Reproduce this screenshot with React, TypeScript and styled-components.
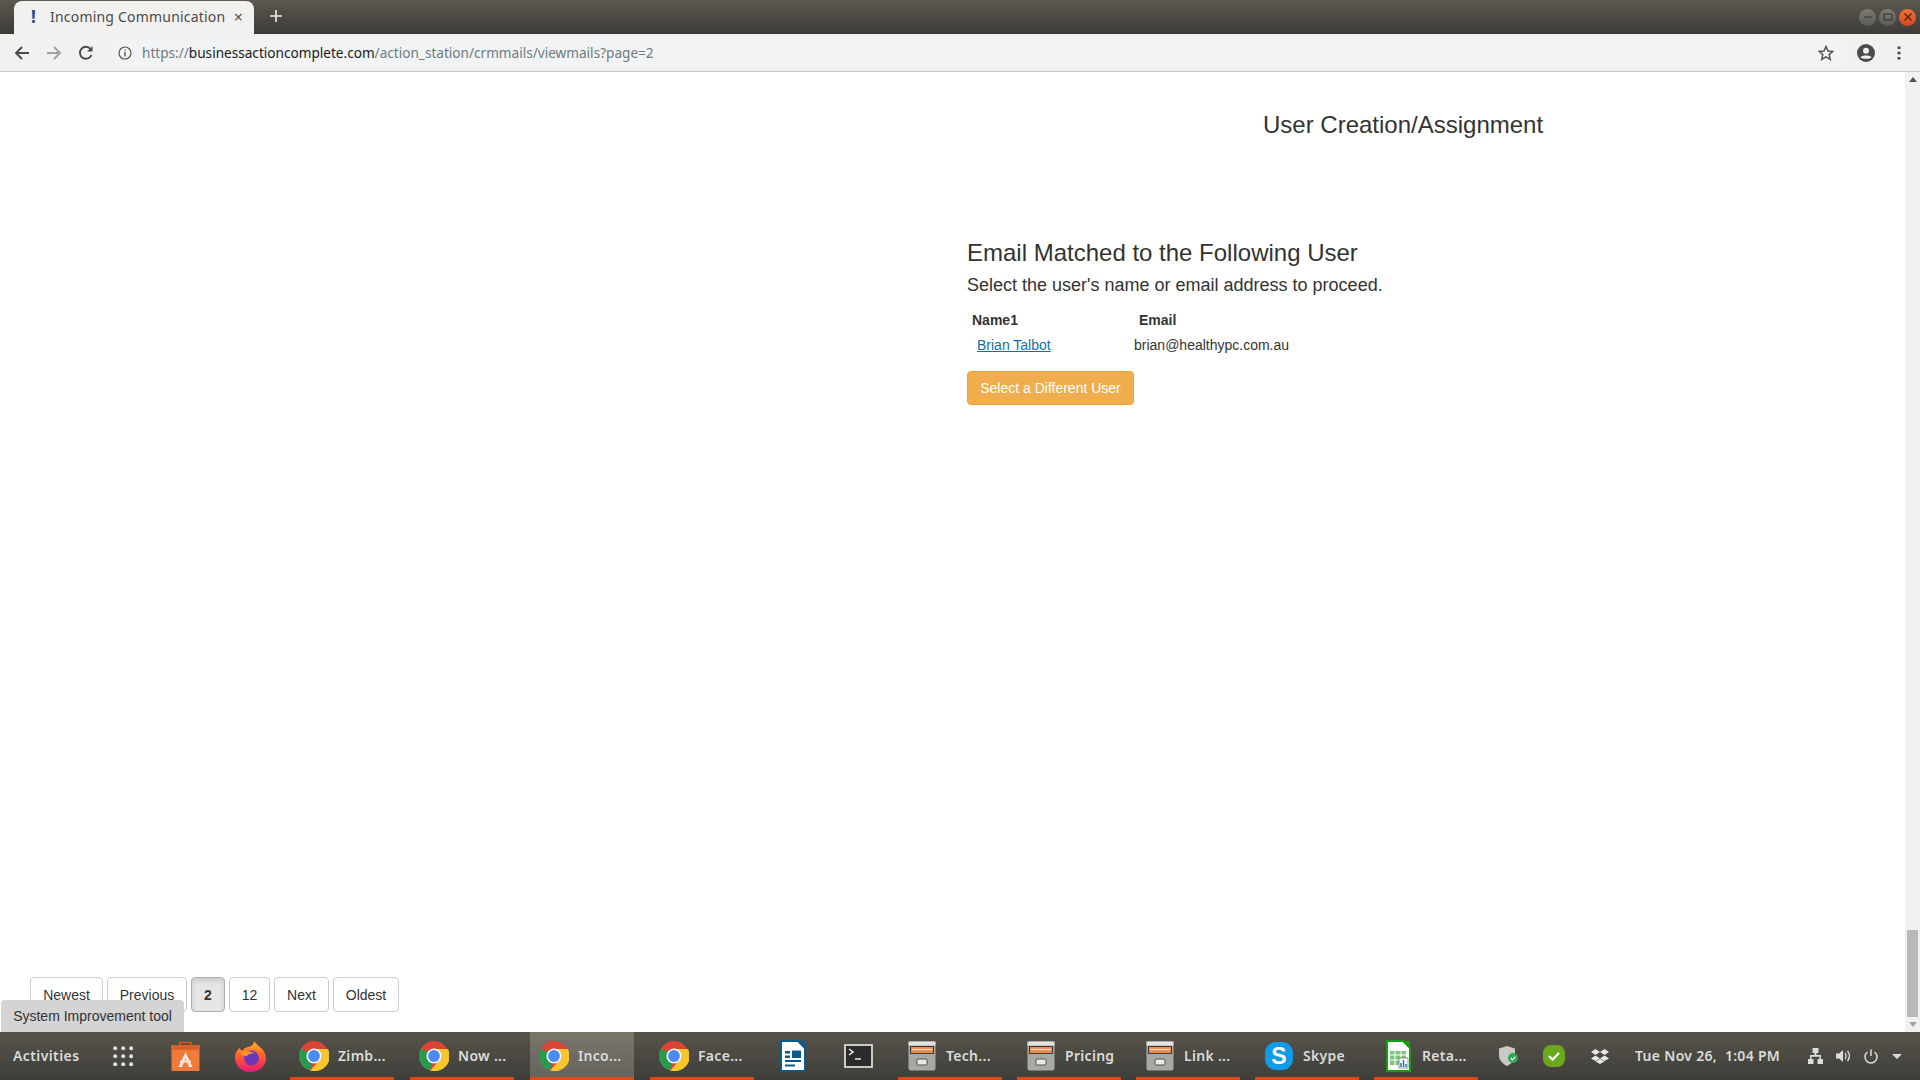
import styled, { createGlobalStyle } from "styled-components";

const GlobalStyle = createGlobalStyle`
  html, body { margin: 0; padding: 0; background: #fff; }
  body { font-family: "Liberation Sans", Arial, sans-serif; overflow: hidden; }
`;

function ChromeIcon() {
  return (
    <svg width="30" height="30" viewBox="0 0 30 30">
      <circle cx="15" cy="15" r="15" fill="#db4437" />
      <path d="M15 15 L2 7.5 A15 15 0 0 0 11.2 29.5 Z" fill="#2a9a50" />
      <path d="M15 8 H28.9 A15 15 0 0 1 11.2 29.5 L21 18.5 Z" fill="#f6c52f" />
      <circle cx="15" cy="15" r="7.6" fill="#f4f4f4" />
      <circle cx="15" cy="15" r="5.9" fill="#4c8bf0" />
    </svg>
  );
}

function StoreIcon() {
  return (
    <svg width="29" height="30" viewBox="0 0 29 30">
      <path d="M9 5 V1.5 H20 V5" fill="none" stroke="#c8531f" strokeWidth="2" />
      <path d="M0.5 4 H28.5 V30 H0.5 Z" fill="#ee7b3a" />
      <path d="M0.5 4 H28.5 V9 H0.5 Z" fill="#d9622a" />
      <path d="M14.5 11 L21.5 26 H18 L14.5 17.5 L11 26 H7.5 Z M9 19.5 H20 V21.5 H9 Z" fill="#fbe7d8" />
    </svg>
  );
}

function FirefoxIcon() {
  return (
    <svg width="31" height="31" viewBox="0 0 31 31">
      <defs>
        <linearGradient id="fx" x1="0" y1="0" x2="0" y2="1">
          <stop offset="0" stopColor="#ffb52e" />
          <stop offset="0.5" stopColor="#ff5a2c" />
          <stop offset="1" stopColor="#e3197a" />
        </linearGradient>
      </defs>
      <path d="M19 0 C22 5 31 8 31 17.5 C31 25.5 24 31 15.5 31 C7 31 0 25 0 17 C0 12 2.5 8.5 4.5 7 C5.5 8.5 6.5 9.5 7.5 9.5 C9.5 6.5 13 5.5 15.5 5.5 C17.5 4.5 19 2.5 19 0 Z" fill="url(#fx)" />
      <ellipse cx="16.5" cy="17" rx="7.5" ry="7.5" fill="#6e37b5" />
      <path d="M5 12 C9 9.5 15 9.5 20 12.5 C16 11.8 13 13 12 15 C8.5 15 6 14 5 12 Z" fill="#ff9a2e" />
    </svg>
  );
}

function WriterIcon() {
  return (
    <svg width="26" height="32" viewBox="0 0 26 32">
      <path d="M1 1 H18 L25 8 V31 H1 Z" fill="#fff" stroke="#0a5a8c" strokeWidth="2" />
      <path d="M18 1 H25 V8 Z" fill="#0a5a8c" />
      <path d="M5 11 H10 V13.5 H5 Z M5 15.5 H10 V18 H5 Z M5 20 H21 V22 H5 Z M5 24.5 H15 V26.5 H5 Z" fill="#0a5a8c" />
      <path d="M12 10.5 H21 V18 H12 Z" fill="#0a5a8c" />
    </svg>
  );
}

function TerminalIcon() {
  return (
    <svg width="29" height="24" viewBox="0 0 29 24">
      <rect x="1" y="1" width="27" height="22" fill="#2b2b2b" stroke="#c9c9c5" strokeWidth="2" />
      <path d="M5 5 L9 8 L5 11" fill="none" stroke="#eee" strokeWidth="1.5" />
      <path d="M11 15 H17" stroke="#eee" strokeWidth="1.5" />
    </svg>
  );
}

function FilesIcon() {
  return (
    <svg width="28" height="30" viewBox="0 0 28 30">
      <rect x="0.5" y="0.5" width="27" height="29" rx="2" fill="#a9a8a5" />
      <rect x="0.5" y="0.5" width="27" height="4" fill="#e2e2df" />
      <rect x="2" y="5" width="24" height="8" fill="#3d3a36" />
      <rect x="3" y="6" width="22" height="6" fill="#e98a4a" />
      <path d="M4 8.5 H24" stroke="#fbe3cf" strokeWidth="1.2" />
      <rect x="9" y="18" width="10" height="6" rx="1" fill="#e8e8e6" stroke="#55534f" />
    </svg>
  );
}

function SkypeIcon() {
  return (
    <svg width="30" height="28" viewBox="0 0 30 28">
      <rect x="1" y="0" width="28" height="28" rx="11" fill="#0f9be8" />
      <text x="15" y="22" textAnchor="middle" fontFamily="Liberation Sans" fontWeight="700" fontSize="23" fill="#fff">S</text>
    </svg>
  );
}

function CalcIcon() {
  return (
    <svg width="25" height="32" viewBox="0 0 25 32">
      <path d="M1 1 H17 L24 8 V31 H1 Z" fill="#fff" stroke="#12a012" strokeWidth="2" />
      <path d="M17 1 H24 V8 Z" fill="#12a012" />
      <path d="M4 11 H20 V25 H4 Z" fill="#7dc67d" />
      <path d="M4 15 H20 M4 20 H20 M9 11 V25 M15 11 V25" stroke="#fff" strokeWidth="1" />
      <rect x="13" y="18" width="9" height="10" fill="#fff" stroke="#555" strokeWidth="0.6" />
      <path d="M15 27 V23 M17.5 27 V20 M20 27 V24" stroke="#2a6cb5" strokeWidth="1.5" />
    </svg>
  );
}

function GridIcon() {
  const dots = [];
  for (let r = 0; r < 3; r++) {
    for (let c = 0; c < 3; c++) {
      dots.push(<circle key={`${r}-${c}`} cx={2.2 + c * 8} cy={2.2 + r * 8} r="2" fill="#e4e4e0" />);
    }
  }
  return (
    <svg width="20.4" height="20.4" viewBox="0 0 20.4 20.4">
      {dots}
    </svg>
  );
}

function ShieldIcon() {
  return (
    <svg width="19" height="20" viewBox="0 0 19 20">
      <path d="M8 0 L16 2.5 V10 C16 14 12 18 8 20 C4 18 0 14 0 10 V2.5 Z" fill="#c9c9c6" />
      <circle cx="14" cy="12" r="5" fill="#2fa84f" />
      <path d="M11.7 12 L13.5 13.8 L16.4 10.6" fill="none" stroke="#fff" strokeWidth="1.2" />
    </svg>
  );
}

function GreenCheckIcon() {
  return (
    <svg width="22" height="22" viewBox="0 0 22 22">
      <rect width="22" height="22" rx="8" fill="#6aa81e" />
      <path d="M6 11 L9.6 14.6 L16 8" fill="none" stroke="#fff" strokeWidth="2.2" />
    </svg>
  );
}

function DropboxIcon() {
  return (
    <svg width="18" height="15" viewBox="0 0 18 15">
      <path d="M4.5 0 L9 3 L4.5 6 L0 3 Z M13.5 0 L18 3 L13.5 6 L9 3 Z M4.5 6.4 L9 9.4 L4.5 12 L0 9.4 Z M13.5 6.4 L18 9.4 L13.5 12 L9 9.4 Z M4.5 12.6 L9 10 L13.5 12.6 L9 15 Z" fill="#e6e6e2" />
    </svg>
  );
}

function NetworkIcon() {
  return (
    <svg width="15" height="16" viewBox="0 0 15 16">
      <path d="M4.5 0 H10.5 V5 H8.5 V7 H13 V11 H15 V16 H9.5 V11 H11.5 V8.7 H3.5 V11 H5.5 V16 H0 V11 H2 V7 H6.5 V5 H4.5 Z" fill="#dcdcd8" />
    </svg>
  );
}

function VolumeIcon() {
  return (
    <svg width="15" height="14" viewBox="0 0 15 14">
      <path d="M0 4.5 H3 L7 1 V13 L3 9.5 H0 Z" fill="#dcdcd8" />
      <path d="M9 4 C10.4 5.5 10.4 8.5 9 10 M11.5 2 C14 4.8 14 9.2 11.5 12" fill="none" stroke="#dcdcd8" strokeWidth="1.4" />
    </svg>
  );
}

function PowerIcon() {
  return (
    <svg width="14" height="15" viewBox="0 0 14 15">
      <path d="M7 0.5 V7" stroke="#dcdcd8" strokeWidth="1.5" />
      <path d="M3.6 3 A6 6 0 1 0 10.4 3" fill="none" stroke="#dcdcd8" strokeWidth="1.5" />
    </svg>
  );
}

const windows = [
  { icon: <ChromeIcon />, label: "Zimb..." },
  { icon: <ChromeIcon />, label: "Now ..." },
  { icon: <ChromeIcon />, label: "Inco...", active: true },
  { icon: <ChromeIcon />, label: "Face..." },
];

const fileWindows = [
  { icon: <FilesIcon />, label: "Tech..." },
  { icon: <FilesIcon />, label: "Pricing" },
  { icon: <FilesIcon />, label: "Link ..." },
  { icon: <SkypeIcon />, label: "Skype" },
  { icon: <CalcIcon />, label: "Reta..." },
];

const pages = [
  { label: "Newest", width: 73 },
  { label: "Previous", width: 80 },
  { label: "2", width: 34, current: true },
  { label: "12", width: 41 },
  { label: "Next", width: 55 },
  { label: "Oldest", width: 66 },
];

export default function App() {
  return (
    <Screen>
      <GlobalStyle />
      <TabStrip>
        <Tab>
          <TabAlert>!</TabAlert>
          <TabTitle>Incoming Communication</TabTitle>
          <TabClose>×</TabClose>
        </Tab>
        <NewTab>
          <svg width="12" height="12" viewBox="0 0 12 12">
            <path d="M6 0 V12 M0 6 H12" stroke="#eee" strokeWidth="1.6" />
          </svg>
        </NewTab>
        <WindowControls>
          <WindowDot>
            <svg width="10" height="10" viewBox="0 0 10 10">
              <path d="M1 5 H9" stroke="#33322e" strokeWidth="1" />
            </svg>
          </WindowDot>
          <WindowDot>
            <svg width="10" height="10" viewBox="0 0 10 10">
              <rect x="1" y="2" width="8" height="6" fill="none" stroke="#33322e" strokeWidth="1" />
            </svg>
          </WindowDot>
          <WindowDot $close>
            <svg width="10" height="10" viewBox="0 0 10 10">
              <path d="M1.5 1.5 L8.5 8.5 M8.5 1.5 L1.5 8.5" stroke="#4a2413" strokeWidth="1.2" />
            </svg>
          </WindowDot>
        </WindowControls>
      </TabStrip>

      <Toolbar>
        <NavButton>
          <svg width="16" height="16" viewBox="0 0 16 16">
            <path d="M15 8 H2 M8 2 L2 8 L8 14" fill="none" stroke="#4a4a4a" strokeWidth="1.9" />
          </svg>
        </NavButton>
        <NavButton>
          <svg width="16" height="16" viewBox="0 0 16 16">
            <path d="M1 8 H14 M8 2 L14 8 L8 14" fill="none" stroke="#a0a0a0" strokeWidth="1.9" />
          </svg>
        </NavButton>
        <NavButton>
          <svg width="16" height="16" viewBox="0 0 16 16">
            <path d="M13.5 10 A6 6 0 1 1 12.6 4" fill="none" stroke="#4a4a4a" strokeWidth="1.9" />
            <path d="M14.5 1 V6.5 H9 Z" fill="#4a4a4a" />
          </svg>
        </NavButton>
        <Omnibox>
          <InfoIcon>
            <svg width="14" height="14" viewBox="0 0 14 14">
              <circle cx="7" cy="7" r="6" fill="none" stroke="#555" strokeWidth="1.2" />
              <path d="M7 6 V10.5 M7 3.4 V4.8" stroke="#555" strokeWidth="1.4" />
            </svg>
          </InfoIcon>
          <Url>
            https://<UrlHost>businessactioncomplete.com</UrlHost>/action_station/crmmails/viewmails?page=2
          </Url>
          <StarIcon>
            <svg width="16" height="16" viewBox="0 0 16 16">
              <path d="M8 1.5 L10 6 L14.8 6.4 L11.2 9.6 L12.3 14.4 L8 11.9 L3.7 14.4 L4.8 9.6 L1.2 6.4 L6 6 Z" fill="none" stroke="#555" strokeWidth="1.5" />
            </svg>
          </StarIcon>
        </Omnibox>
        <AccountIcon>
          <svg width="18" height="18" viewBox="0 0 18 18">
            <circle cx="9" cy="9" r="9" fill="#4b4b4b" />
            <circle cx="9" cy="6.8" r="3" fill="#f1f0ef" />
            <path d="M3.5 13.2 C5 10.8 13 10.8 14.5 13.2 C13 15.2 5 15.2 3.5 13.2 Z" fill="#f1f0ef" />
          </svg>
        </AccountIcon>
        <MenuIcon>
          <svg width="4" height="14" viewBox="0 0 4 14">
            <path d="M0.5 0.5 H3.5 V3 H0.5 Z M0.5 5.7 H3.5 V8.2 H0.5 Z M0.5 11 H3.5 V13.5 H0.5 Z" fill="#4b4b4b" />
          </svg>
        </MenuIcon>
      </Toolbar>

      <Viewport>
        <Page>
          <PageTitle>User Creation/Assignment</PageTitle>
          <MatchSection>
            <MatchHeading>Email Matched to the Following User</MatchHeading>
            <MatchHint>Select the user's name or email address to proceed.</MatchHint>
            <UserTable>
              <thead>
                <tr>
                  <NameHead>Name1</NameHead>
                  <EmailHead>Email</EmailHead>
                </tr>
              </thead>
              <tbody>
                <tr>
                  <NameCell>
                    <UserLink href="#">Brian Talbot</UserLink>
                  </NameCell>
                  <EmailCell>brian@healthypc.com.au</EmailCell>
                </tr>
              </tbody>
            </UserTable>
            <WarningButton>Select a Different User</WarningButton>
          </MatchSection>
          <Pagination>
            {pages.map((p) => (
              <PageButton key={p.label} $width={p.width} $current={p.current}>
                {p.label}
              </PageButton>
            ))}
          </Pagination>
          <ToolTab>System Improvement tool</ToolTab>
        </Page>
        <Scrollbar>
          <ScrollArrow $up />
          <ScrollTrack>
            <ScrollThumb />
          </ScrollTrack>
          <ScrollArrow />
        </Scrollbar>
      </Viewport>

      <Taskbar>
        <Activities>Activities</Activities>
        <Launcher $width={46}>
          <GridIcon />
        </Launcher>
        <Launcher $width={78}>
          <StoreIcon />
        </Launcher>
        <Launcher $width={52}>
          <FirefoxIcon />
        </Launcher>
        <WindowGroup $gap={16}>
          {windows.map((w, i) => (
            <WindowButton key={i} $active={w.active}>
              <WindowIcon>{w.icon}</WindowIcon>
              <WindowLabel>{w.label}</WindowLabel>
            </WindowButton>
          ))}
        </WindowGroup>
        <Launcher $width={78}>
          <WriterIcon />
        </Launcher>
        <Launcher $width={52}>
          <TerminalIcon />
        </Launcher>
        <WindowGroup $gap={15}>
          {fileWindows.map((w) => (
            <WindowButton key={w.label}>
              <WindowIcon>{w.icon}</WindowIcon>
              <WindowLabel>{w.label}</WindowLabel>
            </WindowButton>
          ))}
        </WindowGroup>
        <Launcher $width={60}>
          <ShieldIcon />
        </Launcher>
        <Launcher $width={32}>
          <GreenCheckIcon />
        </Launcher>
        <Launcher $width={60}>
          <DropboxIcon />
        </Launcher>
        <Clock>Tue Nov 26,  1:04 PM</Clock>
        <Tray>
          <NetworkIcon />
          <VolumeIcon />
          <PowerIcon />
          <TrayCaret />
        </Tray>
      </Taskbar>
    </Screen>
  );
}

const Screen = styled.div`
  width: 1920px;
  height: 1080px;
  display: flex;
  flex-direction: column;
  overflow: hidden;
`;

const TabStrip = styled.div`
  height: 34px;
  flex: none;
  display: flex;
  align-items: flex-end;
  padding-left: 14px;
  background: linear-gradient(#5b584e, #3c3b36);
`;

const Tab = styled.div`
  width: 240px;
  height: 33px;
  box-sizing: border-box;
  display: flex;
  align-items: center;
  padding: 0 11px 2px 17px;
  background: #f2f1f0;
  border-radius: 8px 8px 0 0;
`;

const TabAlert = styled.span`
  width: 19px;
  font: 700 17px "Noto Sans", sans-serif;
  color: #1d4a9e;
`;

const TabTitle = styled.span`
  font: 400 14px "Noto Sans", sans-serif;
  letter-spacing: 0.2px;
  color: #4a4a4a;
  white-space: nowrap;
  flex: 1;
`;

const TabClose = styled.span`
  font: 400 16px "Noto Sans", sans-serif;
  color: #555;
`;

const NewTab = styled.div`
  margin-left: 16px;
  height: 31px;
  display: flex;
  align-items: center;
  align-self: flex-start;
`;

const WindowControls = styled.div`
  margin-left: auto;
  margin-right: 4px;
  align-self: center;
  display: flex;
  gap: 3px;
`;

const WindowDot = styled.div<{ $close?: boolean }>`
  width: 17px;
  height: 17px;
  border-radius: 50%;
  display: flex;
  align-items: center;
  justify-content: center;
  background: ${(p) => (p.$close ? "linear-gradient(#f0703a, #d9481a)" : "linear-gradient(#7d7c75, #5a5953)")};
`;

const Toolbar = styled.div`
  height: 38px;
  flex: none;
  box-sizing: border-box;
  display: flex;
  align-items: center;
  padding-left: 6px;
  background: #f2f1f0;
  border-bottom: 1px solid #c9c9c9;
`;

const NavButton = styled.div`
  width: 32px;
  height: 32px;
  display: flex;
  align-items: center;
  justify-content: center;
`;

const Omnibox = styled.div`
  width: 1740px;
  height: 30px;
  margin-left: 8px;
  display: flex;
  align-items: center;
  border-radius: 15px;
  background: #f1f3f4;
`;

const InfoIcon = styled.div`
  margin-left: 8px;
  display: flex;
`;

const Url = styled.div`
  margin-left: 10px;
  font: 400 13.6px "Noto Sans", sans-serif;
  color: #6f7b80;
  white-space: nowrap;
  flex: 1;
`;

const UrlHost = styled.span`
  color: #1a1a1a;
`;

const StarIcon = styled.div`
  display: flex;
  margin-right: 16px;
`;

const AccountIcon = styled.div`
  display: flex;
  margin-left: 7px;
`;

const MenuIcon = styled.div`
  display: flex;
  margin-left: 22px;
`;

const Viewport = styled.div`
  flex: 1;
  min-height: 0;
  display: flex;
`;

const Page = styled.div`
  position: relative;
  flex: 1;
  display: flex;
  flex-direction: column;
  background: #fff;
  color: #333;
`;

const PageTitle = styled.h3`
  margin: 40px 0 0 1263px;
  font: 400 24px/26px "Liberation Sans", sans-serif;
`;

const MatchSection = styled.div`
  margin: 100px 0 0 967px;
  display: flex;
  flex-direction: column;
  align-items: flex-start;
`;

const MatchHeading = styled.h3`
  margin: 0;
  font: 400 24px/30px "Liberation Sans", sans-serif;
`;

const MatchHint = styled.div`
  margin-top: 4px;
  font: 400 18px/26px "Liberation Sans", sans-serif;
`;

const UserTable = styled.table`
  margin-top: 7px;
  border-collapse: collapse;
  font: 400 14px/20px "Liberation Sans", sans-serif;
`;

const NameHead = styled.th`
  width: 167px;
  padding: 5px;
  box-sizing: border-box;
  text-align: left;
`;

const EmailHead = styled.th`
  padding: 5px;
  text-align: left;
`;

const NameCell = styled.td`
  padding: 0 0 5px 10px;
`;

const EmailCell = styled.td`
  padding: 0 0 5px 0;
`;

const UserLink = styled.a`
  color: #1070ad;
  text-decoration: underline;
`;

const WarningButton = styled.button`
  margin-top: 11px;
  width: 167px;
  height: 34px;
  padding: 0;
  border: 1px solid #eea236;
  border-radius: 4px;
  background: #f0ad4e;
  color: #fff;
  font: 400 14px "Liberation Sans", sans-serif;
`;

const Pagination = styled.div`
  margin: auto 0 20px 30px;
  display: flex;
  gap: 4px;
`;

const PageButton = styled.button<{ $width: number; $current?: boolean }>`
  width: ${(p) => p.$width}px;
  height: 35px;
  padding: 0;
  border: 1px solid ${(p) => (p.$current ? "#adadad" : "#ccc")};
  border-radius: 4px;
  background: ${(p) => (p.$current ? "#e6e6e6" : "#fff")};
  color: #333;
  font: ${(p) => (p.$current ? 700 : 400)} 14px "Liberation Sans", sans-serif;
  box-shadow: ${(p) => (p.$current ? "inset 0 3px 5px rgba(0, 0, 0, 0.125)" : "none")};
`;

const ToolTab = styled.div`
  position: absolute;
  left: 1px;
  bottom: 0;
  width: 183px;
  height: 32px;
  display: flex;
  align-items: center;
  justify-content: center;
  background: #d4d4d4;
  border-radius: 4px 4px 0 0;
  font: 400 14px "Liberation Sans", sans-serif;
  color: #333;
`;

const Scrollbar = styled.div`
  width: 15px;
  flex: none;
  display: flex;
  flex-direction: column;
  background: #f1f1f1;
`;

const ScrollArrow = styled.div<{ $up?: boolean }>`
  height: 15px;
  flex: none;
  display: flex;
  align-items: center;
  justify-content: center;
  &::before {
    content: "";
    border-left: 4px solid transparent;
    border-right: 4px solid transparent;
    ${(p) => (p.$up ? "border-bottom: 5px solid #505050;" : "border-top: 5px solid #a3a3a3;")}
  }
`;

const ScrollTrack = styled.div`
  flex: 1;
  display: flex;
  flex-direction: column;
  justify-content: flex-end;
  padding: 0 2px;
`;

const ScrollThumb = styled.div`
  height: 87px;
  background: #b9b9b9;
`;

const Taskbar = styled.div`
  height: 48px;
  flex: none;
  display: flex;
  align-items: stretch;
  background: linear-gradient(#575349, #3f3e3a);
  color: #dadcdc;
  font: 600 14px "Noto Sans", sans-serif;
`;

const Activities = styled.div`
  width: 100px;
  flex: none;
  box-sizing: border-box;
  padding: 0 0 2px 13px;
  display: flex;
  align-items: center;
  letter-spacing: 0.4px;
`;

const Launcher = styled.div<{ $width: number }>`
  width: ${(p) => p.$width}px;
  flex: none;
  display: flex;
  align-items: center;
  justify-content: center;
`;

const WindowGroup = styled.div<{ $gap: number }>`
  margin-left: 14px;
  display: flex;
  gap: ${(p) => p.$gap}px;
`;

const WindowButton = styled.div<{ $active?: boolean }>`
  width: 104px;
  flex: none;
  box-sizing: border-box;
  padding-left: 9px;
  display: flex;
  align-items: center;
  box-shadow: inset 0 -3px 0 #dd4814;
  background: ${(p) => (p.$active ? "linear-gradient(#7a766c, #65625b)" : "transparent")};
`;

const WindowIcon = styled.div`
  width: 30px;
  flex: none;
  display: flex;
  justify-content: center;
`;

const WindowLabel = styled.span`
  margin: 0 0 2px 9px;
  white-space: nowrap;
  letter-spacing: 0.3px;
`;

const Clock = styled.div`
  margin-left: 5px;
  padding-bottom: 2px;
  width: 173px;
  flex: none;
  display: flex;
  align-items: center;
  white-space: pre;
  letter-spacing: 0.3px;
`;

const Tray = styled.div`
  display: flex;
  align-items: center;
  gap: 13px;
`;

const TrayCaret = styled.div`
  margin-left: 1px;
  border-left: 5px solid transparent;
  border-right: 5px solid transparent;
  border-top: 5px solid #dcdcd8;
`;
